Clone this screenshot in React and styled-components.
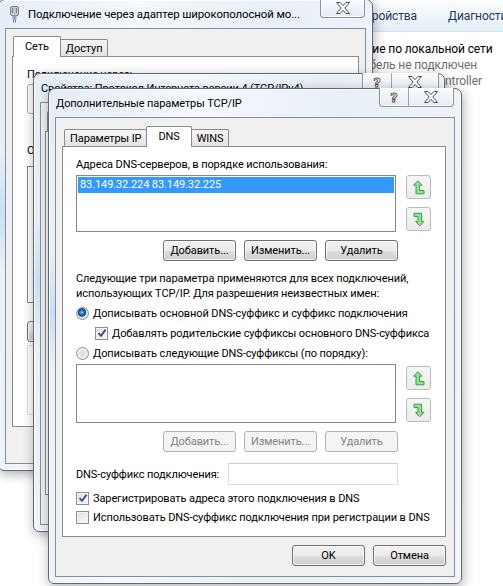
import React from 'react';
import styled, { createGlobalStyle } from 'styled-components';

const GlobalStyle = createGlobalStyle`
  html, body { margin: 0; padding: 0; background: #fff; }
  body {
    font-family: Roboto, 'Liberation Sans', sans-serif;
    font-size: 11px;
    letter-spacing: -0.1px;
    color: #000;
  }
  * { box-sizing: border-box; }
`;

const Desktop = styled.div`
  position: relative;
  width: 503px;
  height: 586px;
  overflow: hidden;
  background: #fff;
`;

/* ---------- explorer window in the back ---------- */

const Explorer = styled.div`
  position: absolute;
  left: 250px;
  top: 0;
  right: 0;
  bottom: 0;
  background: #fff;
  display: flex;
  flex-direction: column;
`;

const Toolbar = styled.div`
  height: 32px;
  flex: none;
  display: grid;
  grid-template-columns: 167px auto;
  column-gap: 31px;
  align-items: center;
  font-size: 12px;
  background: linear-gradient(#fbfdff, #eef4fa 60%, #e4edf6);
  border-bottom: 1px solid #d6e0ea;
  color: #1e395b;
  white-space: nowrap;
`;

const ToolbarItem = styled.span`
  text-align: ${(p) => p.$align || 'left'};
  overflow: hidden;
  direction: ${(p) => (p.$align === 'right' ? 'rtl' : 'ltr')};
`;

const ConnectionItem = styled.div`
  padding: 9px 0 0 ${(p) => p.$indent}px;
  font-size: 12px;
  line-height: 16px;
  white-space: nowrap;
`;

const ItemLine = styled.div`
  color: ${(p) => (p.$muted ? '#6d6d6d' : '#000')};
`;

/* ---------- window chrome ---------- */

const Frame = styled.div`
  position: absolute;
  isolation: isolate;
  left: ${(p) => p.$x}px;
  top: ${(p) => p.$y}px;
  width: ${(p) => p.$w}px;
  height: ${(p) => p.$h}px;
  display: flex;
  flex-direction: column;
  padding: 0 6px 6px;
  border: 1px solid #5f6873;
  border-radius: 7px 7px 6px 6px;
  background:
    radial-gradient(ellipse 30px 60px at 4px 45%, rgba(170, 210, 245, 0.55), transparent),
    linear-gradient(100deg, #e5edf6 0%, #f4f8fc 30%, #e8eff7 60%, #f2f6fa 100%);
  box-shadow: inset 0 0 0 1px rgba(255, 255, 255, 0.75), 1px 3px 12px rgba(0, 0, 0, 0.32);
`;

const TitleBar = styled.div`
  height: 28px;
  flex: none;
  display: flex;
  align-items: center;
  gap: 9px;
  padding-left: ${(p) => p.$pad}px;
  white-space: nowrap;
  overflow: hidden;
`;

const TitleText = styled.span`
  color: #000;
  font-size: ${(p) => p.$size || 11}px;
`;

const CaptionGroup = styled.div`
  position: absolute;
  top: -1px;
  right: ${(p) => p.$right}px;
  height: 19px;
  display: flex;
  border: 1px solid rgba(55, 65, 78, 0.55);
  border-top: none;
  border-radius: 0 0 4px 4px;
  background: linear-gradient(#fafcfe, #e4ebf3);
  box-shadow: inset 0 0 0 1px rgba(255, 255, 255, 0.8);
  overflow: hidden;
`;

const CaptionButton = styled.div`
  width: ${(p) => p.$w}px;
  display: flex;
  align-items: center;
  justify-content: center;
  & + & {
    border-left: 1px solid rgba(55, 65, 78, 0.45);
  }
`;

const HelpGlyph = styled.span`
  font-family: 'DejaVu Sans', sans-serif;
  font-weight: bold;
  font-size: 13px;
  line-height: 1;
  color: #fff;
  -webkit-text-stroke: 0.9px #555;
`;

const Client = styled.div`
  flex: 1;
  display: flex;
  flex-direction: column;
  padding: ${(p) => p.$pad};
  border: 1px solid #858d97;
  background: #f0f0f0;
  overflow: hidden;
`;

/* ---------- tabs ---------- */

const Tabs = styled.div`
  position: relative;
  z-index: 1;
  display: flex;
  align-items: flex-end;
  height: 21px;
  margin-bottom: -1px;
  padding-left: ${(p) => p.$indent}px;
`;

const Tab = styled.div`
  height: ${(p) => (p.$active ? 21 : 17)}px;
  margin-bottom: ${(p) => (p.$active ? 0 : 1)}px;
  padding: ${(p) => (p.$active ? '0 11px 1px' : '1px 5px 0')};
  display: flex;
  align-items: center;
  border: 1px solid #898c95;
  border-bottom: none;
  border-radius: 2px 2px 0 0;
  background: ${(p) => (p.$active ? '#fff' : 'linear-gradient(#f6f6f6, #e3e3e3)')};
  white-space: nowrap;
  & + & {
    margin-left: -1px;
  }
`;

const TabPanel = styled.div`
  height: ${(p) => p.$h}px;
  flex: none;
  display: flex;
  flex-direction: column;
  padding: ${(p) => p.$pad};
  border: 1px solid #898c95;
  background: #fff;
`;

/* ---------- controls ---------- */

const Label = styled.div`
  line-height: 16px;
  white-space: nowrap;
  margin-top: ${(p) => p.$mt || 0}px;
`;

const Paragraph = styled.div`
  margin-top: ${(p) => p.$mt || 0}px;
  line-height: 15px;
  white-space: nowrap;
`;

const ListRow = styled.div`
  display: flex;
  gap: 10px;
  margin-top: ${(p) => p.$mt || 0}px;
`;

const ListBox = styled.div`
  width: 322px;
  height: ${(p) => p.$h}px;
  padding: 1px;
  border: 1px solid #828790;
  background: #fff;
`;

const ListItem = styled.div`
  height: 16px;
  line-height: 16px;
  padding-left: 2px;
  color: ${(p) => (p.$selected ? '#fff' : '#000')};
  background: ${(p) => (p.$selected ? '#3399ff' : 'transparent')};
  white-space: nowrap;
`;

const ArrowCol = styled.div`
  display: flex;
  flex-direction: column;
  gap: 8px;
  padding-top: ${(p) => p.$pt || 0}px;
`;

const ArrowButton = styled.div`
  width: 25px;
  height: 24px;
  display: flex;
  align-items: center;
  justify-content: center;
  border: 1px solid #b9bcbf;
  border-radius: 3px;
  background: linear-gradient(#f6f6f6, #ececec);
`;

const ButtonRow = styled.div`
  display: flex;
  justify-content: ${(p) => p.$justify || 'flex-end'};
  gap: 8px;
  width: ${(p) => (p.$w ? `${p.$w}px` : 'auto')};
  margin-top: ${(p) => p.$mt || 0}px;
`;

const Button = styled.div`
  width: ${(p) => p.$w || 73}px;
  height: 21px;
  display: flex;
  align-items: center;
  justify-content: center;
  border: 1px solid ${(p) => (p.$disabled ? '#adb2b5' : '#707070')};
  border-radius: 3px;
  color: ${(p) => (p.$disabled ? '#838383' : '#000')};
  background: ${(p) =>
    p.$disabled
      ? '#f4f4f4'
      : 'linear-gradient(#f2f2f2 0%, #ebebeb 50%, #dddddd 51%, #cfcfcf 100%)'};
  box-shadow: ${(p) => (p.$disabled ? 'none' : 'inset 0 0 0 1px rgba(255,255,255,0.7)')};
  white-space: nowrap;
`;

const OptionRow = styled.div`
  display: flex;
  align-items: center;
  gap: 4px;
  height: 16px;
  margin-top: ${(p) => p.$mt || 0}px;
  padding-left: ${(p) => p.$indent || 0}px;
  white-space: nowrap;
`;

const RadioMark = styled.span`
  flex: none;
  width: 13px;
  height: 13px;
  border-radius: 50%;
  border: 1px solid #8e8f8f;
  background: ${(p) =>
    p.$on
      ? 'radial-gradient(circle at 45% 40%, #b5ecff 0, #2f8ed8 1.5px, #124a82 3.5px, #2a5f8e 4px, #dcdcdc 4.6px, #f6f6f6 100%)'
      : 'radial-gradient(circle at 50% 50%, #d8d8d8 0, #e6e6e6 3px, #fafafa 100%)'};
`;

const CheckMark = styled.span`
  flex: none;
  width: 13px;
  height: 13px;
  display: flex;
  align-items: center;
  justify-content: center;
  border: 1px solid #8e8f8f;
  background: linear-gradient(135deg, #dcdcdc, #fbfbfb);
  box-shadow: inset 0 0 0 1px #f4f4f4;
`;

const SuffixRow = styled.div`
  display: flex;
  align-items: center;
  margin-top: ${(p) => p.$mt || 0}px;
`;

const SuffixLabel = styled.div`
  width: 152px;
  white-space: nowrap;
`;

const TextInput = styled.div`
  width: 170px;
  height: 22px;
  border: 1px solid #dadde2;
  border-top-color: #c9cdd2;
  background: #fff;
`;

const Footer = styled.div`
  display: flex;
  justify-content: flex-end;
  gap: 8px;
  margin-top: 8px;
`;

/* ---------- window 1 slivers ---------- */

const AdapterBox = styled.div`
  width: 318px;
  height: 30px;
  margin-top: 1px;
  border: 1px solid #a5acb5;
  border-radius: 3px;
  background: #fff;
`;

const ComponentList = styled.div`
  width: 318px;
  height: 137px;
  margin-top: 7px;
  border: 1px solid #828790;
  background: #fff;
`;

const GroupBox = styled.div`
  width: 318px;
  height: 70px;
  margin-top: 3px;
  border: 1px solid #d5dfe5;
  border-radius: 3px;
`;

/* ---------- icons ---------- */

const CloseGlyph = () => (
  <svg width="14" height="12" viewBox="-0.5 -0.5 14 12">
    <polygon
      points="0,0 3.6,0 6.5,3.1 9.4,0 13,0 8.4,5.5 13,11 9.4,11 6.5,7.9 3.6,11 0,11 4.6,5.5"
      fill="#fff"
      stroke="#4f4f4f"
      strokeWidth="1"
      strokeLinejoin="round"
    />
  </svg>
);

const UpIcon = () => (
  <svg width="12" height="15" viewBox="0 0 12 15">
    <polygon
      points="4.75,0.8 9,5.2 6.5,5.2 6.5,10.5 11,10.5 11,13.8 3,13.8 3,5.2 0.5,5.2"
      fill="#8fe48f"
      stroke="#3f9f4c"
      strokeWidth="1"
      strokeLinejoin="round"
    />
  </svg>
);

const DownIcon = () => (
  <svg width="12" height="15" viewBox="0 0 12 15">
    <polygon
      points="1,1.2 8.5,1.2 8.5,9.4 11,9.4 6.75,13.8 2.5,9.4 5,9.4 5,4.5 1,4.5"
      fill="#8fe48f"
      stroke="#3f9f4c"
      strokeWidth="1"
      strokeLinejoin="round"
    />
  </svg>
);

const Check = () => (
  <svg width="10" height="10" viewBox="0 0 10 10">
    <path d="M1.5 5.2 L4 7.8 L8.6 1.6" fill="none" stroke="#3a4f86" strokeWidth="1.8" />
  </svg>
);

const AdapterIcon = () => (
  <svg width="9" height="17" viewBox="0 0 9 17">
    <rect x="0.5" y="0.5" width="8" height="9" rx="1.5" fill="#c9cdd2" stroke="#7c838c" />
    <rect x="2" y="2" width="1.2" height="5" fill="#7c838c" />
    <rect x="5.8" y="2" width="1.2" height="5" fill="#7c838c" />
    <rect x="2.5" y="9.5" width="4" height="4" fill="#9aa3ad" />
    <rect x="3" y="13.5" width="1" height="3" fill="#3a7fd0" />
    <rect x="5" y="13.5" width="1" height="3" fill="#3a7fd0" />
  </svg>
);

/* ---------- pieces ---------- */

function Window({ x, y, w, h, title, titleSize, icon, titlePad, help, captionRight, closeW, pad, children }) {
  return (
    <Frame $x={x} $y={y} $w={w} $h={h}>
      <TitleBar $pad={titlePad}>
        {icon}
        <TitleText $size={titleSize}>{title}</TitleText>
      </TitleBar>
      <CaptionGroup $right={captionRight}>
        {help && (
          <CaptionButton $w={28}>
            <HelpGlyph>?</HelpGlyph>
          </CaptionButton>
        )}
        <CaptionButton $w={closeW}>
          <CloseGlyph />
        </CaptionButton>
      </CaptionGroup>
      <Client $pad={pad}>{children}</Client>
    </Frame>
  );
}

function Radio({ on, children, mt }) {
  return (
    <OptionRow $mt={mt}>
      <RadioMark $on={on} />
      {children}
    </OptionRow>
  );
}

function CheckOption({ on, children, mt, indent }) {
  return (
    <OptionRow $mt={mt} $indent={indent}>
      <CheckMark>{on && <Check />}</CheckMark>
      {children}
    </OptionRow>
  );
}

function OrderedList({ h, mt, arrowTop, items = [] }) {
  return (
    <ListRow $mt={mt}>
      <ListBox $h={h}>
        {items.map((item) => (
          <ListItem key={item} $selected>
            {item}
          </ListItem>
        ))}
      </ListBox>
      <ArrowCol $pt={arrowTop}>
        <ArrowButton>
          <UpIcon />
        </ArrowButton>
        <ArrowButton>
          <DownIcon />
        </ArrowButton>
      </ArrowCol>
    </ListRow>
  );
}

function EditButtons({ disabled, mt }) {
  return (
    <ButtonRow $w={322} $mt={mt}>
      <Button $disabled={disabled}>Добавить...</Button>
      <Button $disabled={disabled}>Изменить...</Button>
      <Button $disabled={disabled}>Удалить</Button>
    </ButtonRow>
  );
}

export default function App() {
  return (
    <Desktop>
      <GlobalStyle />

      <Explorer>
        <Toolbar>
          <ToolbarItem $align="right">Отключение сетевого устройства</ToolbarItem>
          <ToolbarItem>Диагностика подключения</ToolbarItem>
        </Toolbar>
        <ConnectionItem $indent={58}>
          <ItemLine>Подключение по локальной сети</ItemLine>
          <ItemLine $muted>Сетевой кабель не подключен</ItemLine>
          <ItemLine $muted>Realtek PCIe FE Family Controller</ItemLine>
        </ConnectionItem>
      </Explorer>

      <Window
        x={-2}
        y={-1}
        w={375}
        h={472}
        titlePad={5}
        titleSize={11.4}
        icon={<AdapterIcon />}
        title="Подключение через адаптер широкополосной мо..."
        captionRight={7}
        closeW={43}
        pad="7px 6px 0 6px"
      >
        <Tabs $indent={1}>
          <Tab $active>Сеть</Tab>
          <Tab>Доступ</Tab>
        </Tabs>
        <TabPanel $h={371} $pad="10px 14px 0 14px">
          <Label>Подключение через:</Label>
          <AdapterBox />
          <Label $mt={29}>Отмеченные компоненты используются этим подключением:</Label>
          <ComponentList />
          <ButtonRow $justify="flex-start" $mt={18}>
            <Button $w={100}>Установить...</Button>
          </ButtonRow>
          <GroupBox />
        </TabPanel>
      </Window>

      <Window
        x={33}
        y={73}
        w={412}
        h={459}
        titlePad={1}
        title="Свойства: Протокол Интернета версии 4 (TCP/IPv4)"
        help
        captionRight={5}
        closeW={47}
        pad="8px 6px 0 4px"
      >
        <Tabs $indent={2}>
          <Tab $active>Общие</Tab>
          <Tab>Альтернативная конфигурация</Tab>
        </Tabs>
        <TabPanel $h={364} $pad="10px" />
      </Window>

      <Window
        x={48}
        y={88}
        w={414}
        h={496}
        titlePad={1}
        title="Дополнительные параметры TCP/IP"
        help
        captionRight={7}
        closeW={45}
        pad="8px 8px 0 6px"
      >
        <Tabs $indent={2}>
          <Tab>Параметры IP</Tab>
          <Tab $active>DNS</Tab>
          <Tab>WINS</Tab>
        </Tabs>
        <TabPanel $h={391} $pad="10px 14px 0 13px">
          <Label>Адреса DNS-серверов, в порядке использования:</Label>
          <OrderedList h={57} mt={2} items={['83.149.32.224 83.149.32.225']} />
          <EditButtons mt={8} />
          <Paragraph $mt={10}>
            Следующие три параметра применяются для всех подключений,
            <br />
            использующих TCP/IP. Для разрешения неизвестных имен:
          </Paragraph>
          <Radio on mt={4}>
            Дописывать основной DNS-суффикс и суффикс подключения
          </Radio>
          <CheckOption on mt={4} indent={19}>
            Добавлять родительские суффиксы основного DNS-суффикса
          </CheckOption>
          <Radio mt={4}>Дописывать следующие DNS-суффиксы (по порядку):</Radio>
          <OrderedList h={59} mt={3} arrowTop={2} />
          <EditButtons disabled mt={8} />
          <SuffixRow $mt={11}>
            <SuffixLabel>DNS-суффикс подключения:</SuffixLabel>
            <TextInput />
          </SuffixRow>
          <CheckOption on mt={5}>
            Зарегистрировать адреса этого подключения в DNS
          </CheckOption>
          <CheckOption mt={3}>
            Использовать DNS-суффикс подключения при регистрации в DNS
          </CheckOption>
        </TabPanel>
        <Footer>
          <Button>OK</Button>
          <Button>Отмена</Button>
        </Footer>
      </Window>
    </Desktop>
  );
}
